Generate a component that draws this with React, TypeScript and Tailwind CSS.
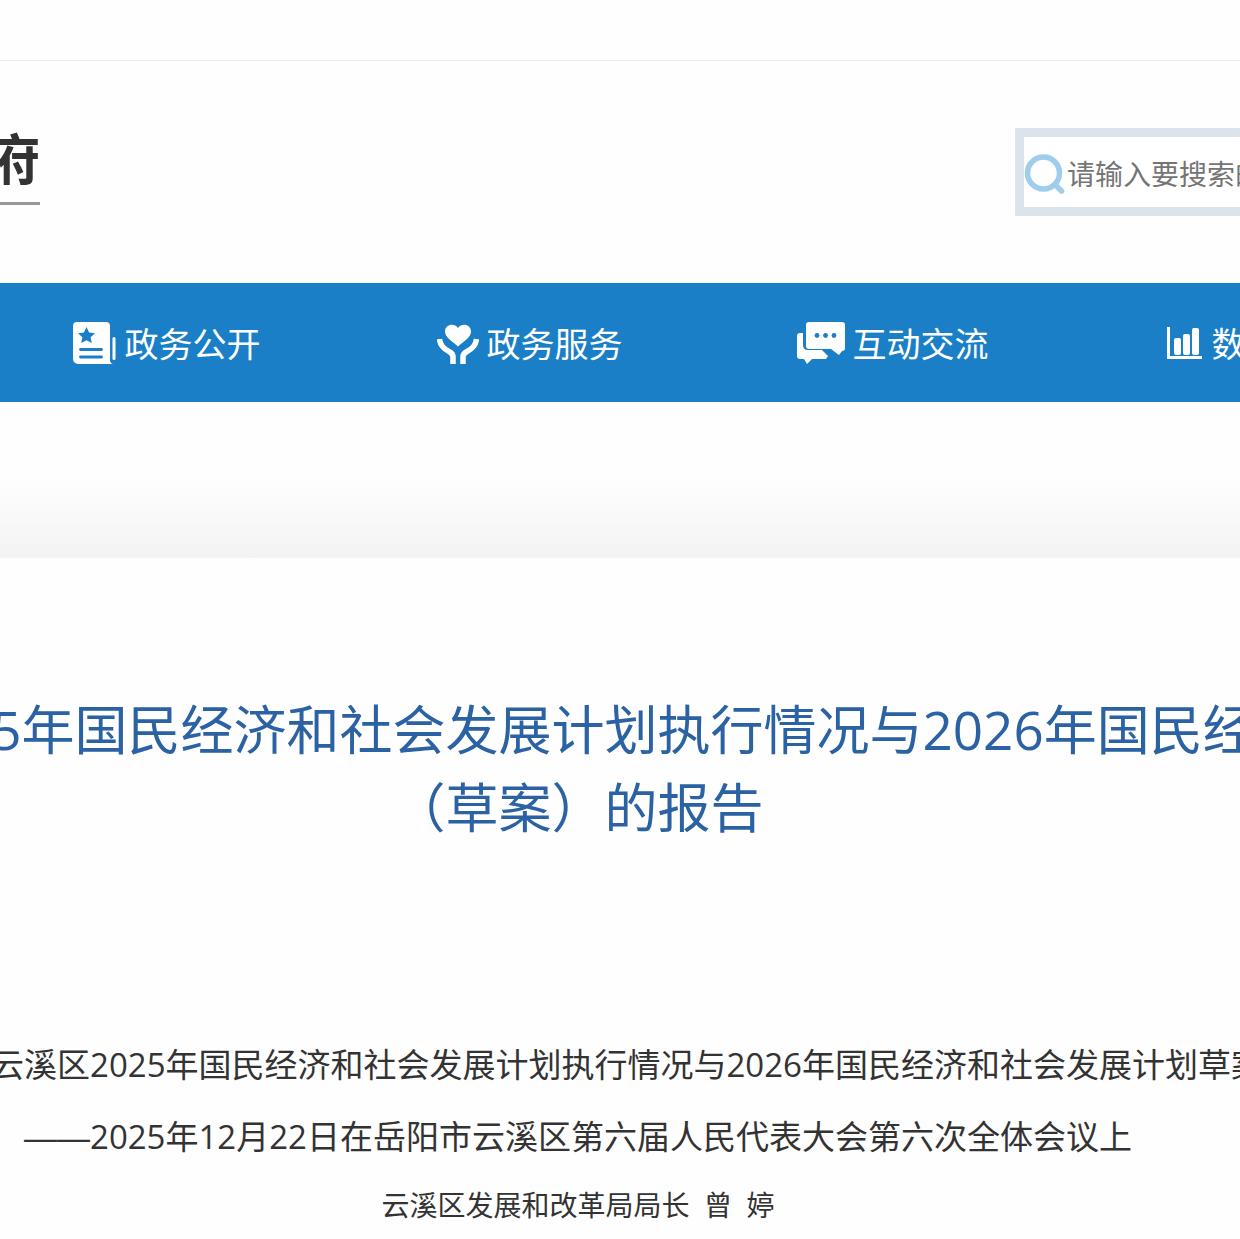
import type { ReactNode } from 'react';

interface NavItem {
  label: string;
  icon: ReactNode;
}

function OpenIcon() {
  return (
    <svg width="44" height="44" viewBox="0 0 44 44" fill="none" aria-hidden="true">
      <path d="M4 1h29a4 4 0 0 1 4 4v34q0 3 3 4H5a5 5 0 0 1-5-5V5a4 4 0 0 1 4-4Z" fill="#fff" />
      <path d="M13.500 6l2.600 5.500 5.900.7-4.400 4 1.200 5.900-5.300-2.900-5.300 2.900 1.200-5.900-4.400-4 5.900-.7Z" fill="#1a7fc6" />
      <path d="M7.500 28.500h21M7.500 36h21" stroke="#1a7fc6" strokeWidth="2.800" strokeLinecap="round" />
      <path d="M41 17.500v20" stroke="#fff" strokeWidth="3" strokeLinecap="round" />
    </svg>
  );
}

function ServiceIcon() {
  return (
    <svg width="42" height="44" viewBox="0 0 42 44" fill="none" aria-hidden="true">
      <path d="M21 25.500C16 21 8 16.500 8 10.500C8 3.500 17 1.500 21 7C25 1.500 34 3.500 34 10.500C34 16.500 26 21 21 25.500Z" fill="#fff" />
      <path d="M2.500 18C3 25 7 28 12 30.500Q16 32.500 16 36V43M39.500 18C39 25 35 28 30 30.500Q26 32.500 26 36V43" stroke="#fff" strokeWidth="5.500" />
    </svg>
  );
}

function ChatIcon() {
  return (
    <svg width="48" height="44" viewBox="0 0 48 44" fill="none" aria-hidden="true">
      <path d="M3 12h3v12q0 5 5 5h14l6 6-2 3H15l-5 5-3-5H3a3 3 0 0 1-3-3V15a3 3 0 0 1 3-3Z" fill="#fff" />
      <path d="M12 1h33a3 3 0 0 1 3 3v23a3 3 0 0 1-3 3l-3 4-8-6H12a3 3 0 0 1-3-3V4a3 3 0 0 1 3-3Z" fill="#fff" />
      <circle cx="20" cy="14.500" r="2.400" fill="#1a7fc6" />
      <circle cx="28.500" cy="14.500" r="2.400" fill="#1a7fc6" />
      <circle cx="37" cy="14.500" r="2.400" fill="#1a7fc6" />
    </svg>
  );
}

function ChartIcon() {
  return (
    <svg width="40" height="44" viewBox="-3 0 40 44" fill="none" aria-hidden="true">
      <path d="M1.500 6v30.500H35" stroke="#fff" strokeWidth="3" />
      <rect x="7" y="17" width="7" height="17" rx="2" fill="#fff" />
      <rect x="16" y="13" width="7" height="21" rx="2" fill="#fff" />
      <rect x="25" y="7" width="7" height="27" rx="2" fill="#fff" />
    </svg>
  );
}

const navItems: NavItem[] = [
  { label: '政务公开', icon: <OpenIcon /> },
  { label: '政务服务', icon: <ServiceIcon /> },
  { label: '互动交流', icon: <ChatIcon /> },
  { label: '数据开放', icon: <ChartIcon /> },
];

export default function App() {
  return (
    <div className="min-h-screen overflow-x-hidden bg-[#fefefe] font-['Open_Sans','Noto_Sans_CJK_SC',sans-serif] text-[#333]">
      {/* Top bar */}
      <div className="h-[61px] border-b border-[#ebebeb]" />

      {/* Header */}
      <header className="flex items-start justify-between pt-[67px] pb-[67px]">
        <a href="#" className="flex w-10 justify-end whitespace-nowrap">
          <span className="border-b-3 border-[#999] pb-3 text-[54px] leading-[62px] font-bold">
            岳阳市云溪区人民政府
          </span>
        </a>
        <form className="-mr-[420px] flex h-[88px] w-[645px] items-center border-9 border-[#dbe4eb] bg-white pt-[3px]">
          <svg width="43" height="42" viewBox="0 0 43 42" fill="none" aria-hidden="true">
            <circle cx="19.500" cy="20" r="16" stroke="#9fcdec" strokeWidth="5.500" />
            <path d="M31.500 32l6 6" stroke="#9fcdec" strokeWidth="5.500" strokeLinecap="round" />
          </svg>
          <input
            type="text"
            aria-label="搜索"
            placeholder="请输入要搜索的内容"
            className="h-full flex-1 text-[28px] outline-none placeholder:text-[#757575]"
          />
        </form>
      </header>

      {/* Navigation */}
      <nav className="flex h-[119px] bg-[#1a7fc6]">
        <div className="-ml-[15px] flex">
          {navItems.map((item) => (
            <a
              key={item.label}
              href="#"
              className="flex w-[363px] shrink-0 items-center justify-center gap-2 text-[34px] whitespace-nowrap text-white"
            >
              {item.icon}
              <span className="pt-1">{item.label}</span>
            </a>
          ))}
        </div>
      </nav>

      <div className="h-[156px] bg-linear-to-b from-[#fefefe] from-50% to-[#f3f3f3]" />

      {/* Article */}
      <main className="pt-[133px] pr-[84px] whitespace-nowrap">
        <h1 className="flex flex-col items-center text-[53px] leading-[78px] text-[#2b62a3]">
          <span>关于岳阳市云溪区2025年国民经济和社会发展计划执行情况与2026年国民经济和社会发展计划</span>
          <span>（草案）的报告</span>
        </h1>
        <div className="mt-[182px] flex flex-col items-center text-[33px] leading-[72px]">
          <p>关于岳阳市云溪区2025年国民经济和社会发展计划执行情况与2026年国民经济和社会发展计划草案报告</p>
          <p>
            <span className="font-['Liberation_Sans',sans-serif] leading-none">——</span>
            2025年12月22日在岳阳市云溪区第六届人民代表大会第六次全体会议上
          </p>
          <p className="text-[28px] leading-[64px]">云溪区发展和改革局局长&nbsp;&nbsp;曾&nbsp;&nbsp;婷</p>
        </div>
      </main>
    </div>
  );
}
